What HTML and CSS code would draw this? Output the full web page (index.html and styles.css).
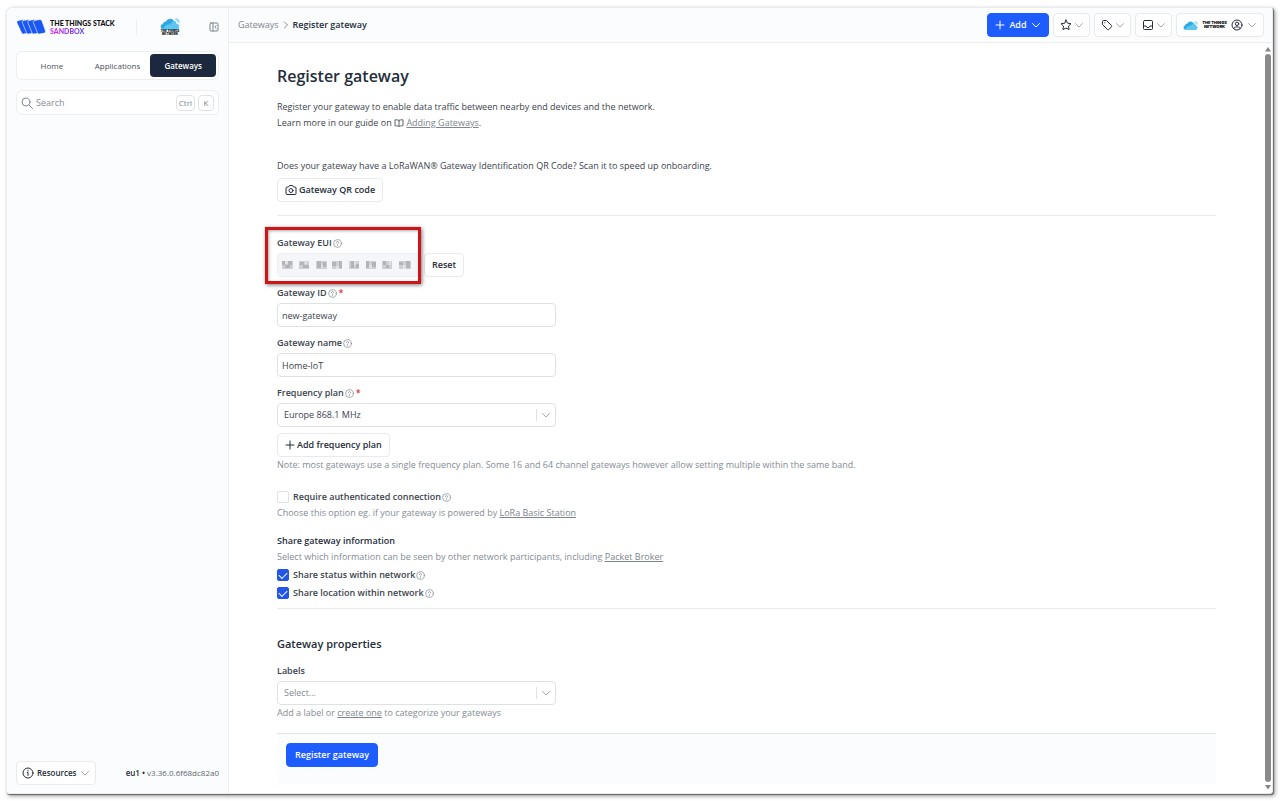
FILE: index.html
```html
<!DOCTYPE html>
<html lang="en">
<head>
<meta charset="UTF-8">
<meta name="viewport" content="width=device-width, initial-scale=1.0">
<title>Register gateway - The Things Stack Sandbox</title>
<link rel="stylesheet" href="styles.css">
</head>
<body>
<!-- shared icons -->
<svg class="icon-defs" aria-hidden="true">
    <symbol id="chevron" viewBox="0 0 10 10"><path d="M1.500 3.500 5 7l3.500-3.500"/></symbol>
    <symbol id="plus" viewBox="0 0 10 10"><path d="M5 1v8M1 5h8"/></symbol>
    <symbol id="help" viewBox="0 0 10 10"><circle cx="5" cy="5" r="4.300"/><path d="M3.800 4a1.200 1.200 0 1 1 1.700 1.100c-.4.2-.5.4-.5.8M5 7.200v.3"/></symbol>
    <symbol id="cloud" viewBox="0 0 20 12"><g stroke="none"><path fill="#2fa8e6" d="M3 11.500A2.800 2.800 0 0 1 2.800 6 3 3 0 0 1 6 3.500 4.500 4.500 0 0 1 14 3a3.500 3.500 0 0 1 2.500 3A2.800 2.800 0 0 1 17 11.500z"/><path fill="#5cc8f2" d="M3 11.500c1-3 3-5 6-5 2 0 2-2 5-3.500a3.500 3.500 0 0 1 2.500 3A2.800 2.800 0 0 1 17 11.500z"/></g><path fill="none" stroke="#5cc8f2" stroke-width=".8" d="M15.500 1.500a3 3 0 0 1 3 3M16 .4a4 4 0 0 1 3.500 3.500"/></symbol>
</svg>

<div class="window">
    <aside class="sidebar">
        <div class="brand">
            <svg class="stack-mark" viewBox="0 0 30 16">
                <g fill="#1b57f5" stroke="#fbfdff" stroke-width=".6">
                    <path d="M2 1.500 8 .5q1.500 0 2 1.500l3.500 10q.3 1.500-1 2L7.500 15q-1.500.2-2-1.200L.8 3.500Q.4 2 2 1.500z"/>
                    <path d="M7.500 1.500 13 .5q1.500 0 2 1.500l3.500 10q.3 1.500-1 2L12.500 15q-1.500.2-2-1.200L6.300 3.500Q5.900 2 7.500 1.500z"/>
                    <path d="M13 1.500 18.500.5q1.500 0 2 1.500L24 12q.3 1.500-1 2L18 15q-1.500.2-2-1.200L11.800 3.500Q11.400 2 13 1.500z"/>
                    <path d="M18.500 1.500 24 .5q1.500 0 2 1.500l3.500 10q.3 1.500-1 2L23.500 15q-1.500.2-2-1.200L17.300 3.500Q16.900 2 18.500 1.500z"/>
                </g>
            </svg>
            <div class="brand-name">THE THINGS STACK<br><span class="sandbox">SANDBOX</span></div>
            <div class="network-logo">
                <svg class="cloud-large"><use href="#cloud"/></svg>
                <div class="network-name">THE THINGS<br>NETWORK</div>
            </div>
            <button class="collapse-btn" aria-label="Collapse sidebar">
                <svg viewBox="0 0 10 10"><rect x="1" y="1" width="8" height="8" rx="1"/><path d="M4 1v8M7.200 3.500 5.700 5l1.500 1.500"/></svg>
            </button>
        </div>
        <nav class="tabs">
            <a href="#">Home</a>
            <a href="#">Applications</a>
            <a href="#" class="active">Gateways</a>
        </nav>
        <label class="search">
            <svg viewBox="0 0 12 12"><circle cx="5" cy="5" r="4"/><path d="m8 8 3.500 3.500"/></svg>
            <input type="search" placeholder="Search" aria-label="Search">
            <kbd>Ctrl</kbd><kbd>K</kbd>
        </label>
        <div class="sidebar-footer">
            <button class="btn resources">
                <svg class="info" viewBox="0 0 12 12"><circle cx="6" cy="6" r="5"/><path d="M5.300 5.500H6V8.500M6 3.300v.7"/></svg>
                Resources
                <svg class="chevron"><use href="#chevron"/></svg>
            </button>
            <div class="version"><b>eu1 •</b> v3.36.0.6f68dc82a0</div>
        </div>
    </aside>

    <div class="page">
        <header class="topbar">
            <div class="breadcrumbs">
                <a href="#">Gateways</a>
                <svg viewBox="0 0 10 10"><path d="m3.500 2 3 3-3 3"/></svg>
                <b>Register gateway</b>
            </div>
            <div class="actions">
                <button class="btn primary add-btn"><svg class="plus"><use href="#plus"/></svg>Add<svg class="chevron"><use href="#chevron"/></svg></button>
                <button class="btn menu-btn" aria-label="Bookmarks">
                    <svg class="action-icon" viewBox="0 0 12 12"><path d="m6 1 1.500 3.200 3.500.5-2.500 2.400.6 3.500L6 9l-3.100 1.600.6-3.500L1 4.700l3.500-.5z"/></svg>
                    <svg class="chevron"><use href="#chevron"/></svg>
                </button>
                <button class="btn menu-btn" aria-label="Labels">
                    <svg class="action-icon" viewBox="0 0 12 12"><path d="M1.500 2.500a1 1 0 0 1 1-1h3l5 5a1 1 0 0 1 0 1.300L7.800 10.500a1 1 0 0 1-1.300 0l-5-5z"/><path d="M3.700 3.700h.2"/></svg>
                    <svg class="chevron"><use href="#chevron"/></svg>
                </button>
                <button class="btn menu-btn" aria-label="Notifications">
                    <svg class="action-icon" viewBox="0 0 12 12"><rect x="1.500" y="1.500" width="9" height="9" rx="1"/><path d="M1.500 7H4l1 1.500h2L8 7h2.500"/></svg>
                    <svg class="chevron"><use href="#chevron"/></svg>
                </button>
                <button class="btn profile-btn" aria-label="Profile">
                    <svg class="cloud-small"><use href="#cloud"/></svg>
                    <span class="network-name">THE THINGS<br>NETWORK</span>
                    <svg class="avatar" viewBox="0 0 12 12"><circle cx="6" cy="6" r="5"/><circle cx="6" cy="4.800" r="1.700"/><path d="M2.800 9.600C3.300 8 4.500 7.900 6 7.900s2.700.1 3.200 1.700"/></svg>
                    <svg class="chevron"><use href="#chevron"/></svg>
                </button>
            </div>
        </header>

        <div class="scroll-area">
            <main>
                <h1>Register gateway</h1>
                <p class="intro">Register your gateway to enable data traffic between nearby end devices and the network.<br>
                Learn more in our guide on <svg class="book" viewBox="0 0 10 8"><path d="M5 1.500v6M5 1.500C4.500 1 3.800.8 1 .8v6c2.800 0 3.500.2 4 .7.500-.5 1.200-.7 4-.7v-6c-2.800 0-3.500.2-4 .7z"/></svg> <a href="#">Adding Gateways</a>.</p>
                <p class="qr-text">Does your gateway have a LoRaWAN® Gateway Identification QR Code? Scan it to speed up onboarding.</p>
                <button class="btn">
                    <svg class="camera" viewBox="0 0 12 12"><path d="M1 4a1 1 0 0 1 1-1h1.500L4.500 1.500h3l1 1.500H10a1 1 0 0 1 1 1v5.500a1 1 0 0 1-1 1H2a1 1 0 0 1-1-1z"/><circle cx="6" cy="6.500" r="2"/></svg>
                    Gateway QR code
                </button>
                <hr>

                <form>
                    <div class="field">
                        <label for="eui">Gateway EUI<svg class="help"><use href="#help"/></svg></label>
                        <div class="eui-row">
                            <div class="eui-box">
                                <input id="eui" class="text-input" type="text" readonly>
                                <!-- masked value -->
                                <svg class="mask" viewBox="0 0 132 12">
                                    <g fill="#cfcfd4"><path d="M1 2h11v8H1zM18 2h10v8H18zM35 2h11v8H35zM51 2h10v8H51zM68 2h10v8H68zM85 2h10v8H85zM101 2h10v8h-10zM118 2h12v8h-12z"/></g>
                                    <g fill="#b3b3b9"><path d="M1 2h3v4H1zM7 2h4v4H7zM4 6h5v3H4zM19 3h4v3h-4zM22 6h6v3h-6zM36 2h4v7h-4zM42 3h3v5h-3zM51 3h4v4h-4zM58 2h3v7h-3zM70 2h3v7h-3zM75 5h3v4h-3zM85 2h3v7h-3zM91 3h4v5h-4zM102 2h3v4h-3zM105 6h3v3h-3zM118 3h4v3h-4zM125 2h4v7h-4z"/></g>
                                    <g fill="#e2e2e6"><path d="M4 2h3v3H4zM24 2h2v3h-2zM40 6h2v3h-2zM55 7h3v3h-3zM73 2h2v4h-2zM88 6h3v3h-3zM108 2h2v4h-2zM122 6h3v4h-3z"/></g>
                                </svg>
                                <div class="highlight"></div>
                            </div>
                            <button type="button" class="btn">Reset</button>
                        </div>
                    </div>
                    <div class="field">
                        <label for="gateway-id">Gateway ID<svg class="help"><use href="#help"/></svg><span class="required">*</span></label>
                        <input id="gateway-id" class="text-input" type="text" value="new-gateway">
                    </div>
                    <div class="field">
                        <label for="gateway-name">Gateway name<svg class="help"><use href="#help"/></svg></label>
                        <input id="gateway-name" class="text-input" type="text" value="Home-IoT">
                    </div>
                    <div class="field">
                        <label for="plan">Frequency plan<svg class="help"><use href="#help"/></svg><span class="required">*</span></label>
                        <div class="select-box">
                            <select id="plan"><option>Europe 868.1 MHz</option></select>
                            <svg class="chevron"><use href="#chevron"/></svg>
                        </div>
                        <button type="button" class="btn add-plan"><svg class="plus"><use href="#plus"/></svg>Add frequency plan</button>
                        <p class="note">Note: most gateways use a single frequency plan. Some 16 and 64 channel gateways however allow setting multiple within the same band.</p>
                    </div>

                    <div class="auth">
                        <label class="check"><input type="checkbox">Require authenticated connection<svg class="help"><use href="#help"/></svg></label>
                        <p class="note">Choose this option eg. if your gateway is powered by <a href="#">LoRa Basic Station</a></p>
                    </div>

                    <div class="share">
                        <h3>Share gateway information</h3>
                        <p class="note">Select which information can be seen by other network participants, including <a href="#">Packet Broker</a></p>
                        <label class="check"><input type="checkbox" checked>Share status within network<svg class="help"><use href="#help"/></svg></label>
                        <label class="check"><input type="checkbox" checked>Share location within network<svg class="help"><use href="#help"/></svg></label>
                    </div>
                    <hr class="share-line">

                    <h2>Gateway properties</h2>
                    <div class="field">
                        <label for="labels">Labels</label>
                        <div class="select-box">
                            <select id="labels" class="empty"><option>Select...</option></select>
                            <svg class="chevron"><use href="#chevron"/></svg>
                        </div>
                        <p class="note">Add a label or <a href="#">create one</a> to categorize your gateways</p>
                    </div>
                    <div class="submit-bar">
                        <button type="button" class="btn primary">Register gateway</button>
                    </div>
                </form>
            </main>
            <div class="scrollbar">
                <svg viewBox="0 0 8 8"><path d="M4 2 7 6.500H1z"/></svg>
                <div class="thumb"></div>
                <svg viewBox="0 0 8 8"><path d="M4 6.500 7 2H1z"/></svg>
            </div>
        </div>
    </div>
</div>
</body>
</html>
```
FILE: styles.css
```css
* {
    box-sizing: border-box;
}
body {
    margin: 0;
    padding: 7px 7px 7px 6px;
    height: 100vh;
    background-color: #fff;
    font-family: "Open Sans", "Noto Sans", sans-serif;
    font-size: 9px;
    line-height: 16px;
    color: #3b434d;
}
h1, h2, h3, p {
    margin: 0;
}
h1, h2, h3, b {
    font-weight: 600;
    color: #252d3a;
}
h1 {
    font-size: 16px;
    line-height: 24px;
}
h2 {
    margin: 25px 0 9px;
    font-size: 11px;
    line-height: 20px;
}
h3 {
    font-size: 9px;
}
a {
    color: #7d858d;
}
button, input, select {
    font: inherit;
    color: inherit;
}
svg {
    flex: none;
    fill: none;
    stroke: currentColor;
    stroke-linecap: round;
    stroke-linejoin: round;
}
hr {
    height: 1px;
    margin: 13px 0 19px;
    border: none;
    background-color: #e8eaed;
}
.icon-defs {
    display: none;
}
.chevron {
    width: 10px;
    height: 10px;
    color: #a3a8ad;
}
.plus {
    width: 10px;
    height: 10px;
}
.window {
    display: flex;
    height: 100%;
    border: 1px solid #e9ebed;
    border-radius: 6px 3px 3px 3px;
    box-shadow: 1px 1px 1px #666, 2px 2px 4px #999;
    background-color: #fff;
}

/* buttons */
.btn {
    display: inline-flex;
    align-items: center;
    justify-content: center;
    gap: 2px;
    height: 24px;
    padding: 0 7px;
    border: 1px solid #e8eaec;
    border-radius: 4px;
    background-color: #fff;
    color: #252d3a;
    font-weight: 600;
    white-space: nowrap;
    cursor: pointer;
}
.primary {
    border-color: #1d5cff;
    background-color: #1d5cff;
    color: #fff;
}

/* sidebar */
.sidebar {
    display: flex;
    flex-direction: column;
    width: 222px;
    flex: none;
    padding: 8px 9px;
    border-right: 1px solid #eceef0;
    border-radius: 6px 0 0 3px;
    background-color: #fafcfe;
}
.brand {
    display: flex;
    align-items: center;
    height: 22px;
}
.stack-mark {
    width: 30px;
    height: 16px;
    margin-right: 4px;
}
.brand-name {
    width: 87px;
    border-right: 1px solid #eceef0;
    font-family: Lato, sans-serif;
    font-size: 7px;
    font-weight: 900;
    line-height: 8px;
    color: #111;
    white-space: nowrap;
}
.sandbox {
    background: linear-gradient(90deg, #d32bea, #5a45f5);
    background-clip: text;
    color: transparent;
}
.network-logo {
    display: flex;
    flex-direction: column;
    align-items: center;
    margin-left: 23px;
}
.network-name {
    font-family: Inter, sans-serif;
    font-size: 3px;
    font-weight: 900;
    line-height: 3px;
    text-align: center;
    color: #111;
}
.cloud-large {
    width: 20px;
    height: 12px;
}
.collapse-btn {
    width: 10px;
    height: 10px;
    margin-left: auto;
    padding: 0;
    border: none;
    background: none;
    color: #7d858d;
}
.collapse-btn svg {
    display: block;
}
.tabs {
    display: flex;
    height: 29px;
    margin-top: 13px;
    padding: 2px;
    border: 1px solid #eceef0;
    border-radius: 6px;
    background-color: #fff;
    font-size: 8px;
}
.tabs a {
    flex: 1;
    border-radius: 4px;
    line-height: 24px;
    text-align: center;
    text-decoration: none;
    color: #4a515a;
}
.tabs .active {
    background-color: #1c283d;
    color: #fff;
    font-weight: 600;
}
.search {
    display: flex;
    align-items: center;
    gap: 3px;
    height: 25px;
    margin-top: 10px;
    padding: 0 4px;
    border: 1px solid #eceef0;
    border-radius: 6px;
    background-color: #fff;
    color: #7d858d;
}
.search svg {
    width: 12px;
    height: 12px;
}
.search input {
    flex: 1;
    min-width: 0;
    padding: 0;
    border: none;
    outline: none;
    background: none;
}
.search input::placeholder {
    color: #858c93;
}
kbd {
    min-width: 16px;
    padding: 0 2px;
    border: 1px solid #dfe2e5;
    border-radius: 4px;
    font: inherit;
    font-size: 8px;
    line-height: 14px;
    text-align: center;
}
.sidebar-footer {
    display: flex;
    align-items: center;
    justify-content: space-between;
    margin-top: auto;
}
.resources {
    gap: 3px;
    padding: 0 5px;
    font-size: 8px;
}
.info {
    width: 12px;
    height: 12px;
}
.version {
    font-size: 8px;
    color: #5f666e;
}

/* top bar */
.page {
    display: flex;
    flex: 1;
    flex-direction: column;
    min-width: 0;
}
.topbar {
    display: flex;
    align-items: center;
    justify-content: space-between;
    height: 35px;
    padding: 0 8px 0 9px;
    border-bottom: 1px solid #eceef0;
    background-color: #fafcfe;
}
.breadcrumbs {
    display: flex;
    align-items: center;
    gap: 2px;
}
.breadcrumbs a {
    text-decoration: none;
}
.breadcrumbs svg {
    width: 10px;
    height: 10px;
    color: #858c93;
}
.actions {
    display: flex;
    gap: 4px;
}
.add-btn {
    width: 62px;
    gap: 4px;
}
.add-btn .chevron {
    color: #fff;
}
.menu-btn {
    width: 37px;
    padding: 0;
}
.action-icon, .avatar, .camera {
    width: 12px;
    height: 12px;
}
.profile-btn {
    width: 88px;
    gap: 4px;
    padding: 0 5px;
}
.profile-btn .network-name {
    font-size: 4px;
    line-height: 4px;
}
.cloud-small {
    width: 15px;
    height: 9px;
}

/* content */
.scroll-area {
    display: flex;
    flex: 1;
    min-height: 0;
}
main {
    flex: 1;
    max-width: 1036px;
    margin: 0 auto;
    padding: 21px 48px 0;
}
.intro {
    margin-top: 11px;
}
.book {
    width: 10px;
    height: 8px;
    color: #5f666e;
    vertical-align: -1px;
}
.qr-text {
    margin: 27px 0 4px;
}
.field {
    margin-bottom: 8px;
}
.field > label {
    display: flex;
    align-items: center;
    margin-bottom: 2px;
    font-weight: 600;
}
.help {
    width: 9px;
    height: 9px;
    margin-left: 1px;
    color: #858c93;
    stroke: #858c93;
    stroke-width: .8;
}
.required {
    margin-left: 2px;
    color: #e0303a;
}
.text-input, .select-box {
    display: block;
    width: 279px;
    height: 24px;
    border: 1px solid #dfe2e5;
    border-radius: 4px;
    background-color: #fff;
}
.text-input {
    padding: 0 4px;
}
.eui-row {
    display: flex;
    gap: 4px;
}
.eui-row .btn {
    width: 40px;
}
.eui-box {
    position: relative;
}
.eui-box .text-input {
    width: 143px;
    border-color: #eceef0;
    background-color: #f5f6fa;
}
.mask {
    position: absolute;
    top: 6px;
    left: 4px;
    width: 132px;
    height: 12px;
    stroke: none;
}
.highlight {
    position: absolute;
    top: -26px;
    left: -12px;
    width: 156px;
    height: 57px;
    border: 3px solid #cc1519;
    box-shadow: 1px 1px 4px #777, inset 1px 1px 3px #aaa;
    pointer-events: none;
}
.select-box {
    position: relative;
}
select {
    width: 100%;
    height: 100%;
    padding: 0 24px 0 6px;
    border: none;
    background: none;
    appearance: none;
}
.select-box::after {
    content: "";
    position: absolute;
    top: 5px;
    right: 18px;
    height: 12px;
    border-right: 1px solid #dfe2e5;
}
.select-box .chevron {
    position: absolute;
    top: 6px;
    right: 4px;
}
.empty, .note {
    color: #858c93;
}
.add-plan {
    margin-top: 6px;
}
.auth {
    margin-top: 16px;
}
.share {
    margin-top: 12px;
}
.share .note {
    margin-bottom: 1px;
}
.check {
    display: flex;
    align-items: center;
    font-weight: 600;
}
.share .check {
    height: 18px;
}
.check input {
    width: 12px;
    height: 12px;
    margin: 0 4px 0 0;
    border: 1px solid #dfe2e5;
    border-radius: 2px;
    background-color: #fff;
    appearance: none;
}
.check input:checked {
    display: grid;
    place-items: center;
    border-color: #2156e8;
    background-color: #2156e8;
}
.check input:checked::after {
    content: "";
    width: 7px;
    height: 4px;
    margin-bottom: 2px;
    border-bottom: 1px solid #fff;
    border-left: 1px solid #fff;
    transform: rotate(-45deg);
}
.share-line {
    margin: 6px 0 0;
}
.submit-bar {
    height: 52px;
    margin-top: 12px;
    padding: 9px;
    border-top: 1px solid #e3e5e8;
    background-color: #fafcfe;
}
.submit-bar .btn {
    padding: 0 8px;
}

/* scrollbar */
.scrollbar {
    display: flex;
    flex-direction: column;
    width: 8px;
    padding: 2px 0;
}
.scrollbar svg {
    width: 8px;
    height: 8px;
    fill: #858585;
    stroke: none;
}
.thumb {
    flex: 1;
    margin: 1px;
    border-radius: 3px;
    background-color: #8a8a8a;
}
```
